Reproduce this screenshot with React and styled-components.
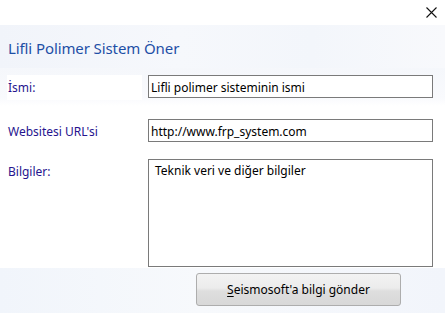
import React from "react";
import styled, { createGlobalStyle } from "styled-components";

const Global = createGlobalStyle`
  html, body { margin: 0; padding: 0; background: #ffffff; }
  body { width: 445px; height: 313px; overflow: hidden; }
`;

const Window = styled.div`
  width: 445px;
  height: 313px;
  display: flex;
  flex-direction: column;
  font-family: "Noto Sans", "Open Sans", sans-serif;
  background: #ffffff;
`;

const TitleBar = styled.div`
  height: 25px;
  flex: none;
  display: flex;
  justify-content: flex-end;
  align-items: center;
  background: #ffffff;
`;

const CloseButton = styled.button`
  width: 24px;
  height: 25px;
  border: 0;
  padding: 0;
  background: transparent;
  display: flex;
  align-items: center;
  justify-content: center;
  margin-right: 2px;
`;

const Header = styled.div`
  height: 43px;
  flex: none;
  display: flex;
  align-items: center;
  padding-left: 8px;
  background: linear-gradient(90deg, #f1f4fa 0%, #f6f8fc 40%, #f3f6fb 70%, #f8f9fc 100%);
`;

const Title = styled.h1`
  margin: 0;
  font-size: 15px;
  font-weight: 400;
  color: #1e4fa6;
  letter-spacing: -0.1px;
  padding-top: 2px;
`;

const Form = styled.div`
  flex: 1;
  display: grid;
  grid-template-columns: 135px 285px;
  column-gap: 6px;
  align-content: start;
  padding: 7px 0 0 7px;
  background: linear-gradient(180deg, #f5f7fb 0px, #f9fafd 30px, #ffffff 38px, #ffffff 100%);
`;

const Label = styled.label`
  height: ${(p) => p.$h || 25}px;
  margin-bottom: ${(p) => p.$mb || 0}px;
  background: #ffffff;
  color: #26148e;
  font-size: 12px;
  padding: ${(p) => p.$pt || 4}px 0 0 1px;
  box-sizing: border-box;
`;

const Field = styled.div`
  height: ${(p) => p.$h}px;
  margin-bottom: ${(p) => p.$mb || 0}px;
  box-sizing: border-box;
  border: 1px solid #7a7a7a;
  background: #ffffff;
  color: #000000;
  font-size: 12px;
  padding: ${(p) => p.$pad || "3px 0 0 2px"};
`;

const Footer = styled.div`
  height: 45px;
  flex: none;
  display: flex;
  align-items: flex-start;
  padding: 5px 0 0 196px;
  box-sizing: border-box;
  background: linear-gradient(90deg, #f1f5fb 0%, #f7f9fc 45%, #f2f5fb 100%);
`;

const Button = styled.button`
  width: 205px;
  height: 33px;
  border: 1px solid #adadad;
  border-radius: 3px;
  background: linear-gradient(180deg, #f3f3f3 0%, #ececec 45%, #dedede 55%, #d8d8d8 100%);
  font-family: "Noto Sans", "Open Sans", sans-serif;
  font-size: 12px;
  color: #000000;
  padding: 0;
  u { text-decoration: underline; text-underline-offset: 2px; }
`;

export default function App() {
  return (
    <Window>
      <Global />
      <TitleBar>
        <CloseButton aria-label="Kapat">
          <svg width="11" height="11" viewBox="0 0 11 11">
            <path d="M0.5 0.5L10.5 10.5M10.5 0.5L0.5 10.5" stroke="#111" strokeWidth="1.1" />
          </svg>
        </CloseButton>
      </TitleBar>
      <Header>
        <Title>Lifli Polimer Sistem Öner</Title>
      </Header>
      <Form>
        <Label $h={25} $mb={19}>İsmi:</Label>
        <Field $h={23} $mb={21}>Lifli polimer sisteminin ismi</Field>
        <Label $h={23} $mb={17}>Websitesi URL'si</Label>
        <Field $h={23} $mb={17}>http://www.frp_system.com</Field>
        <Label $h={23}>Bilgiler:</Label>
        <Field $h={108} $pad="2px 0 0 6px">Teknik veri ve diğer bilgiler</Field>
      </Form>
      <Footer>
        <Button>
          <u>S</u>eismosoft'a bilgi gönder
        </Button>
      </Footer>
    </Window>
  );
}
